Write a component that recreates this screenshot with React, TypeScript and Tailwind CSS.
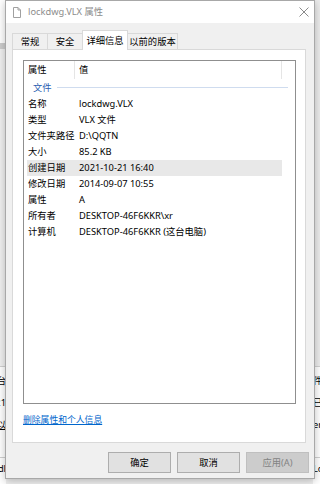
const rows = [
  ["名称", "lockdwg.VLX"],
  ["类型", "VLX 文件"],
  ["文件夹路径", "D:\\QQTN"],
  ["大小", "85.2 KB"],
  ["创建日期", "2021-10-21 16:40"],
  ["修改日期", "2014-09-07 10:55"],
  ["属性", "A"],
  ["所有者", "DESKTOP-46F6KKR\\xr"],
  ["计算机", "DESKTOP-46F6KKR (这台电脑)"],
];

const tabs = ["常规", "安全", "详细信息", "以前的版本"];
const tabWidths = ["w-[35px]", "w-[35px]", "w-[46px]", "w-[50px]"];

export default function App() {
  return (
    <div className="relative w-[320px] h-[484px] overflow-hidden bg-[#f0f0f0] text-[9.3px] leading-none text-black font-['Noto_Sans','Noto_Sans_CJK_SC',sans-serif]">
      {/* window behind the dialog */}
      <div className="flex h-full justify-between">
        <div className="w-[6px] flex flex-col">
          <div className="h-[43px] bg-white" />
          <div className="h-[6px] bg-[#cdcdcd]" />
          <div className="h-[318px] bg-[#f0f0f0] border-b border-[#d0d0d0]" />
          <div className="flex-1 bg-white flex flex-col pt-[3px]">
            <div className="h-[22px] flex items-center justify-end overflow-hidden"><span className="whitespace-nowrap">这台</span></div>
            <div className="h-[22px] flex items-center justify-end overflow-hidden"><span className="whitespace-nowrap">2021</span></div>
            <div className="h-[22px] flex items-center justify-end overflow-hidden"><span className="whitespace-nowrap underline">所以</span></div>
            <div className="h-[22px] border-b border-[#d0d0d0]" />
            <div className="h-[22px] flex items-center justify-end overflow-hidden"><span className="whitespace-nowrap">dl</span></div>
          </div>
        </div>
        <div className="w-[7px] flex flex-col">
          <div className="h-[367px] bg-[#ececec] border-b border-[#d0d0d0]" />
          <div className="flex-1 bg-white flex flex-col pt-[3px]">
            <div className="h-[22px] flex items-center overflow-hidden"><span className="whitespace-nowrap">件夹</span></div>
            <div className="h-[22px] flex items-center overflow-hidden"><span className="whitespace-nowrap">已经</span></div>
            <div className="h-[22px] flex items-center overflow-hidden"><span className="whitespace-nowrap">er</span></div>
            <div className="h-[22px] border-b border-[#d0d0d0]" />
            <div className="h-[22px] flex items-center overflow-hidden"><span className="whitespace-nowrap">Lo</span></div>
          </div>
        </div>
      </div>

      {/* properties dialog */}
      <div className="absolute left-[5px] top-0 w-[310px] h-[479px] flex flex-col bg-[#f0f0f0] border border-[#a8a8a8] shadow-[0_2px_8px_rgba(0,0,0,0.25)]">
        <div className="h-[22px] bg-white flex items-center pl-[7px]">
          <svg width="8" height="11" viewBox="0 0 8 11" className="shrink-0">
            <path d="M0.5 0.5 H5 L7.5 3 V10.5 H0.5 Z" fill="#fff" stroke="#a0a0a0" />
            <path d="M5 0.5 V3 H7.5" fill="none" stroke="#a0a0a0" />
          </svg>
          <span className="ml-[7px] text-[#8c8c8c]">lockdwg.VLX 属性</span>
          <svg width="10" height="10" viewBox="0 0 10 10" className="ml-auto mr-[5px]">
            <path d="M0.5 0.5 L9.5 9.5 M9.5 0.5 L0.5 9.5" stroke="#8a8a8a" strokeWidth="1" />
          </svg>
        </div>

        <div className="mt-[7px] ml-[6px] flex items-end h-[19px]">
          {tabs.map((t, i) =>
            i === 2 ? (
              <div
                key={t}
                className={`${tabWidths[i]} h-[20px] -mb-px z-10 bg-white border border-b-0 border-[#d9d9d9] flex items-center justify-center`}
              >
                {t}
              </div>
            ) : (
              <div
                key={t}
                className={`${tabWidths[i]} h-[16px] bg-[#f0f0f0] border-t border-[#d9d9d9] ${i === 0 ? "border-l" : ""} ${i === 1 ? "border-l" : ""} ${i === 3 ? "border-r" : ""} flex items-center justify-center`}
              >
                {t}
              </div>
            )
          )}
        </div>

        <div className="ml-[6px] w-[294px] h-[394px] bg-white border border-[#d9d9d9] flex flex-col">
          <div className="mt-[10px] ml-[10px] w-[273px] h-[344px] border border-[#8f8f8f] flex flex-col">
            <div className="h-[18px] flex">
              <div className="w-[51px] pl-[4px] border-r border-[#e5e5e5] flex items-center">属性</div>
              <div className="w-[207px] pl-[4px] border-r border-[#e5e5e5] flex items-center">值</div>
            </div>
            <div className="h-[17px] flex items-center pl-[9px] pr-[7px]">
              <span className="text-[#2a5db0]">文件</span>
              <div className="flex-1 h-px bg-[#cfdcef] ml-[5px]" />
            </div>
            {rows.map(([k, v]) => (
              <div
                key={k}
                className={`h-[16px] ml-[3px] w-[255px] flex items-center ${k === "创建日期" ? "bg-[#e8e8e8]" : ""}`}
              >
                <span className="w-[52px] pl-[1px] whitespace-nowrap">{k}</span>
                <span className="whitespace-nowrap">{v}</span>
              </div>
            ))}
          </div>
          <div className="mt-[12px] ml-[10px] text-[8.8px] text-[#0066cc] underline">删除属性和个人信息</div>
        </div>

        <div className="mt-[9px] mr-[5px] flex justify-end gap-[6px]">
          <button className="w-[63px] h-[21px] bg-[#e1e1e1] border border-[#adadad] flex items-center justify-center">确定</button>
          <button className="w-[63px] h-[21px] bg-[#e1e1e1] border border-[#adadad] flex items-center justify-center">取消</button>
          <button className="w-[63px] h-[21px] bg-[#cccccc] border border-[#bfbfbf] text-[#838383] flex items-center justify-center">应用(A)</button>
        </div>
      </div>
    </div>
  );
}
